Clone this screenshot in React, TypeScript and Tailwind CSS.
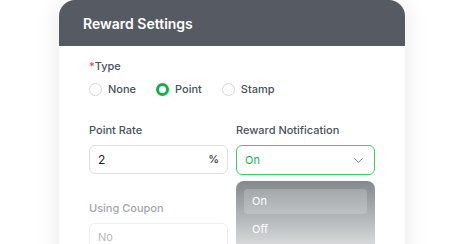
import { ChevronDown } from 'lucide-react';

function Radio({ label, checked }: { label: string; checked?: boolean }) {
  return (
    <label className="flex items-center gap-[6px]">
      {checked ? (
        <span className="shrink-0 w-[13px] h-[13px] rounded-full border-[3.5px] border-[#10b04a] bg-white" />
      ) : (
        <span className="shrink-0 w-[13px] h-[13px] rounded-full border border-[#d4d6d9] bg-white" />
      )}
      <span className="text-[11px] font-medium text-[#4b5159]">{label}</span>
    </label>
  );
}

export default function App() {
  return (
    <div className="w-[465px] h-[244px] bg-white overflow-hidden font-['Inter',sans-serif]">
      <div className="ml-[59px] w-[346px] h-[300px] rounded-t-[16px] bg-white shadow-[0_0_26px_rgba(0,0,0,0.09)]">
        <div className="h-[46px] rounded-t-[16px] bg-[#565b63] px-[24px] flex items-center">
          <h1 className="text-[14px] font-semibold text-white">Reward Settings</h1>
        </div>

        <div className="px-[30px] pt-[12px]">
          <div className="text-[11px] text-[#4b5159] font-medium leading-[16px]">
            <span className="text-[#ef4444]">*</span>Type
          </div>
          <div className="mt-[7px] flex items-center gap-[20px] h-[16px]">
            <Radio label="None" />
            <Radio label="Point" checked />
            <Radio label="Stamp" />
          </div>

          <div className="mt-[25px] grid grid-cols-2 gap-[8px]">
            <div>
              <div className="text-[11px] text-[#4b5159] font-medium leading-[16px]">Point Rate</div>
              <div className="mt-[7px] h-[29px] rounded-[6px] border border-[#dcdfe3] px-[8px] flex items-center justify-between">
                <span className="text-[12px] text-[#1f2328]">2</span>
                <span className="text-[11px] text-[#1f2328]">%</span>
              </div>
            </div>
            <div className="relative">
              <div className="text-[11px] text-[#4b5159] font-medium leading-[16px]">Reward Notification</div>
              <div className="mt-[7px] h-[30px] rounded-[6px] border border-[#3ccb6c] px-[8px] flex items-center justify-between">
                <span className="text-[11px] text-[#19b34d]">On</span>
                <ChevronDown size={15} strokeWidth={1.5} className="text-[#6b7078]" />
              </div>
              <div className="absolute left-0 top-[59px] w-[139px] h-[80px] rounded-[8px] bg-gradient-to-b from-[#83898c] to-[#eeeff0] p-[8px] z-10">
                <div className="h-[25px] rounded-[4px] bg-white/20 px-[8px] flex items-center text-[11px] text-white">On</div>
                <div className="h-[31px] px-[8px] flex items-center text-[11px] text-white">Off</div>
              </div>
            </div>
          </div>

          <div className="mt-[25px]">
            <div className="text-[11px] text-[#a3a7ad] font-medium leading-[16px]">Using Coupon</div>
            <div className="mt-[7px] h-[29px] w-[139px] rounded-[6px] border border-[#eceef0] px-[8px] flex items-center">
              <span className="text-[11px] text-[#b5b9be]">No</span>
            </div>
          </div>
        </div>
      </div>
    </div>
  );
}
